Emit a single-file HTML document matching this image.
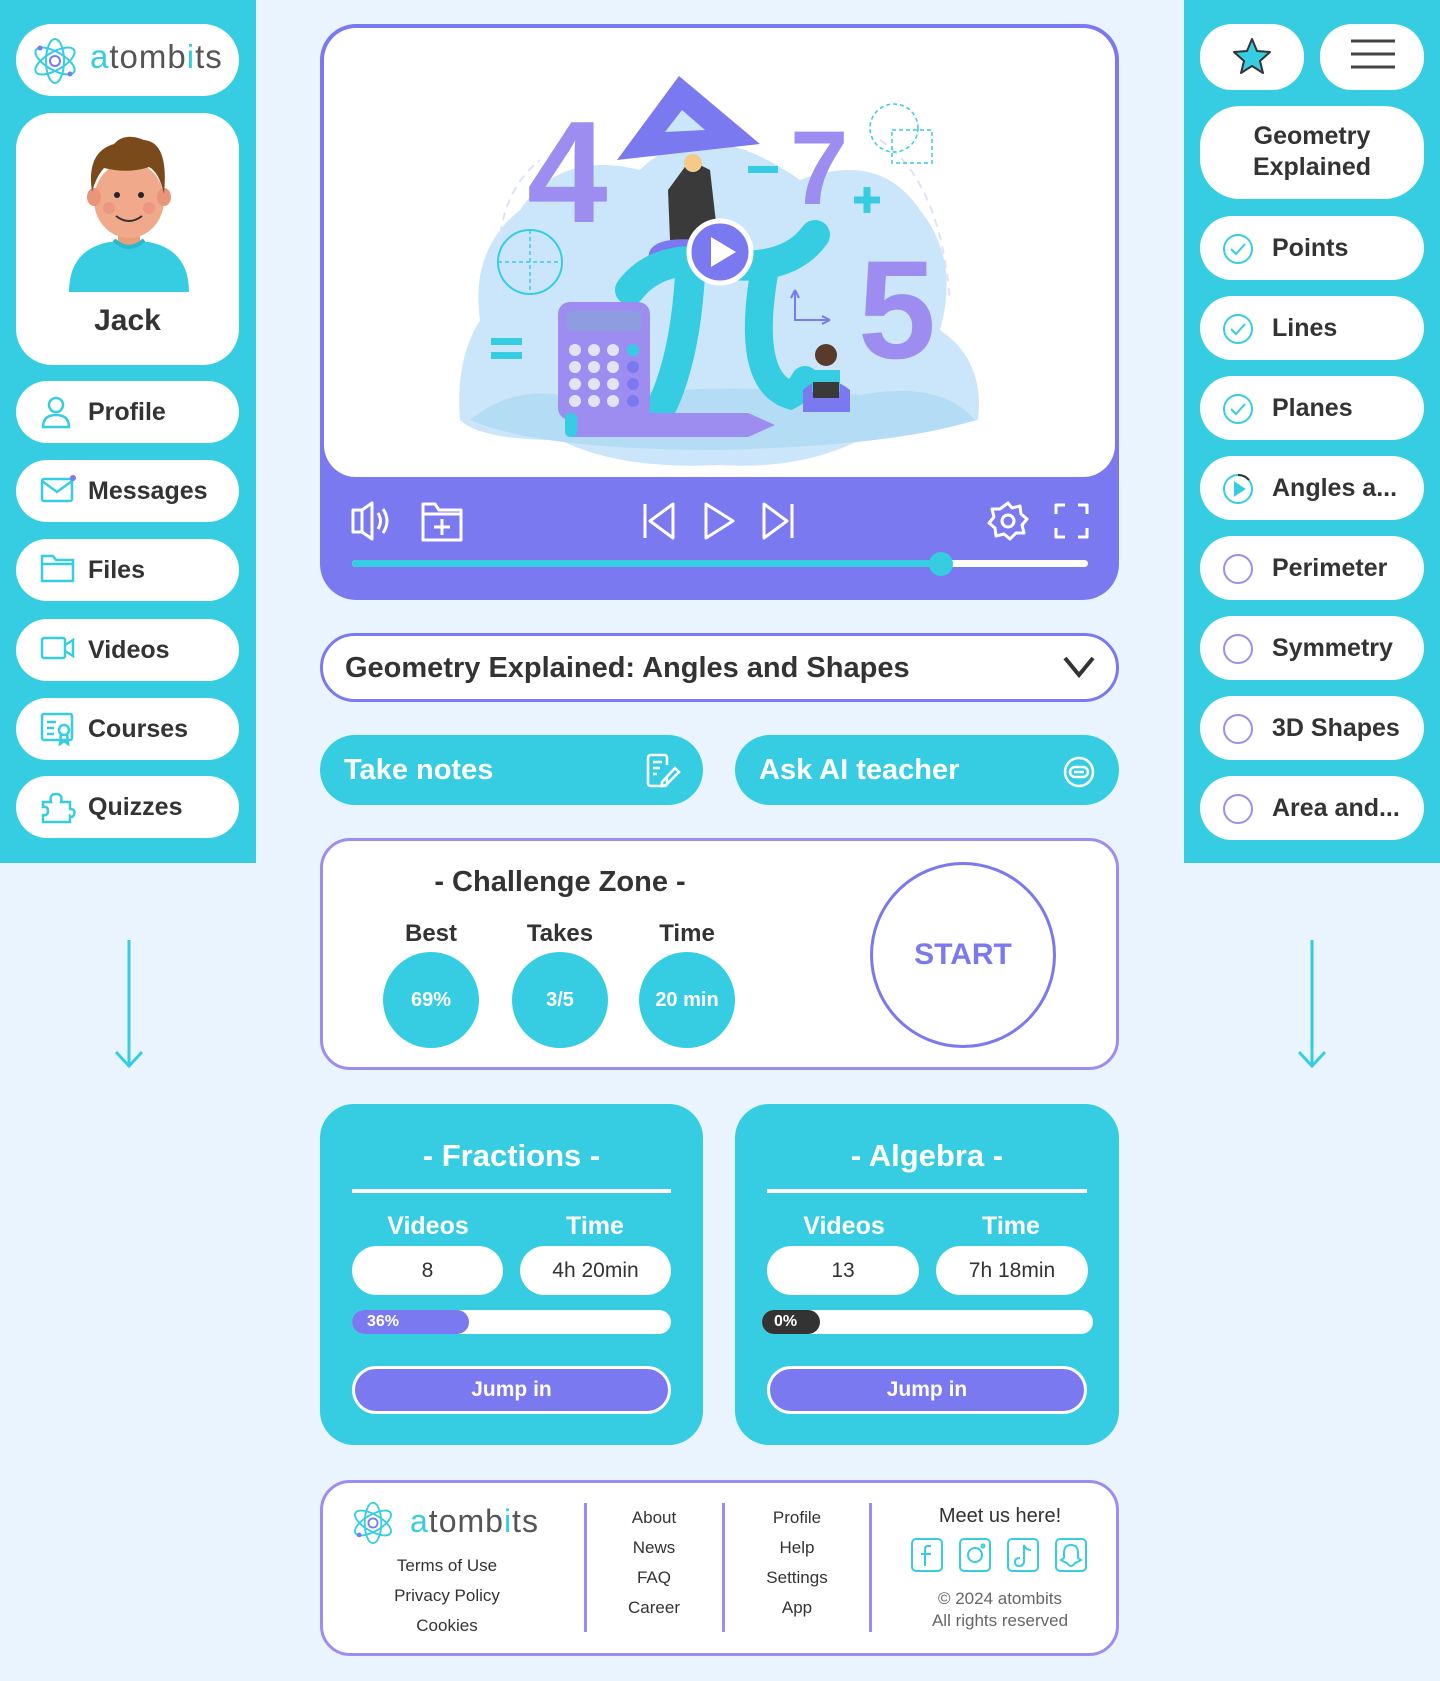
<!DOCTYPE html>
<html><head><meta charset="utf-8"><style>
*{box-sizing:border-box;margin:0;padding:0}
body{width:1440px;height:1681px;background:#EAF4FE;position:relative;overflow:hidden;font-family:"Liberation Sans",sans-serif;color:#333;font-weight:bold}
.a{position:absolute}
.side{background:#36CDE3}
.pill{position:absolute;background:#fff;border-radius:32px}
.nav{left:16px;width:223px;height:62px;font-size:25px;display:flex;align-items:center;padding-left:72px}
.nav svg{position:absolute;left:24px;top:14px}
.ri{left:1200px;width:224px;height:64px;font-size:25px;display:flex;align-items:center;padding-left:72px}
.ri svg{position:absolute;left:22px;top:17px}
.c{text-align:center}
.w{color:#fff}
</style></head><body>
<div class="a side" style="left:0;top:0;width:256px;height:863px"></div>
<div class="pill" style="left:16px;top:24px;width:223px;height:72px;border-radius:36px"></div>
<svg class="a" style="left:30px;top:36px" width="50" height="50" viewBox="0 0 50 50"><g fill="none" stroke="#36CDE3" stroke-width="2"><ellipse cx="25" cy="25" rx="22" ry="9" transform="rotate(30 25 25)"/><ellipse cx="25" cy="25" rx="22" ry="9" transform="rotate(-30 25 25)"/><ellipse cx="25" cy="25" rx="22" ry="9" transform="rotate(90 25 25)"/></g><circle cx="25" cy="25" r="5" fill="none" stroke="#7B79F0" stroke-width="2"/><circle cx="10" cy="12" r="2.5" fill="#7B79F0"/><circle cx="40" cy="38" r="2.5" fill="#7B79F0"/></svg>
<div class="a" style="left:90px;top:38px;font-size:33px;font-weight:normal;color:#36CDE3;letter-spacing:1px">a<span style="color:#555">tomb</span>i<span style="color:#555">ts</span></div>
<div class="pill" style="left:16px;top:113px;width:223px;height:252px;border-radius:36px"></div>
<svg class="a" style="left:64px;top:132px" width="130" height="162" viewBox="0 0 130 162"><path d="M5 160 Q5 118 45 110 L85 110 Q125 118 125 160 Z" fill="#36CDE3"/><rect x="54" y="92" width="22" height="22" fill="#E8A07A"/><path d="M50 108 Q65 122 80 108" fill="none" stroke="#2BB8CC" stroke-width="4"/><ellipse cx="65" cy="68" rx="35" ry="38" fill="#F0A98A"/><ellipse cx="30" cy="65" rx="7" ry="9" fill="#E8957A"/><ellipse cx="100" cy="65" rx="7" ry="9" fill="#E8957A"/><path d="M28 60 Q22 20 50 12 Q60 0 80 8 Q105 10 100 62 Q95 40 85 35 Q65 42 40 36 Q32 45 28 60Z" fill="#7A4A1A"/><circle cx="53" cy="63" r="3" fill="#223"/><circle cx="77" cy="63" r="3" fill="#223"/><path d="M52 84 Q65 94 78 84" fill="none" stroke="#333" stroke-width="2"/><circle cx="45" cy="76" r="6" fill="#E8857A" opacity=".5"/><circle cx="85" cy="76" r="6" fill="#E8857A" opacity=".5"/></svg>
<div class="a c" style="left:16px;top:304px;width:223px;font-size:30px">Jack</div>

<div class="pill nav" style="top:381px"><svg width="32" height="34" viewBox="0 0 32 34" fill="none" stroke="#36CDE3" stroke-width="2.5"><circle cx="16" cy="10" r="7"/><path d="M3 32 Q3 20 16 20 Q29 20 29 32 Z"/></svg>Profile</div>
<div class="pill nav" style="top:460px"><svg width="36" height="30" viewBox="0 0 36 30" fill="none" stroke="#36CDE3" stroke-width="2.5"><rect x="2" y="5" width="30" height="22" rx="2"/><path d="M2 7 L17 18 L32 7"/><circle cx="33" cy="4" r="3" fill="#7B79F0" stroke="none"/></svg>Messages</div>
<div class="pill nav" style="top:539px"><svg width="36" height="30" viewBox="0 0 36 30" fill="none" stroke="#36CDE3" stroke-width="2.5"><path d="M2 3 H13 L16 7 H33 V28 H2 Z M2 11 H33"/></svg>Files</div>
<div class="pill nav" style="top:619px"><svg width="36" height="30" viewBox="0 0 36 30" fill="none" stroke="#36CDE3" stroke-width="2.5"><rect x="2" y="5" width="23" height="20" rx="2"/><path d="M25 12 L33 7 V23 L25 18"/></svg>Videos</div>
<div class="pill nav" style="top:698px"><svg width="36" height="34" viewBox="0 0 36 34" fill="none" stroke="#36CDE3" stroke-width="2.5"><rect x="2" y="2" width="30" height="26" rx="2"/><path d="M7 10 H16 M7 16 H14 M7 22 H14"/><circle cx="24" cy="18" r="5"/><path d="M21 22 L20 32 L24 29 L28 32 L27 22"/></svg>Courses</div>
<div class="pill nav" style="top:776px"><svg width="36" height="34" viewBox="0 0 36 34" fill="none" stroke="#36CDE3" stroke-width="2.5"><path d="M3 12 H11 Q9 4 16 4 Q23 4 21 12 H30 V19 Q36 19 34 25 Q32 28 30 26 V32 H3 V25 Q8 26 8 21 Q8 16 3 17 Z"/></svg>Quizzes</div>

<svg class="a" style="left:113px;top:938px" width="32" height="134"><path d="M16 2 V128 M3 114 L16 128 L29 114" fill="none" stroke="#36CDE3" stroke-width="3"/></svg>
<svg class="a" style="left:1296px;top:938px" width="32" height="134"><path d="M16 2 V128 M3 114 L16 128 L29 114" fill="none" stroke="#36CDE3" stroke-width="3"/></svg>

<div class="a side" style="left:1184px;top:0;width:256px;height:863px"></div>
<div class="pill" style="left:1200px;top:24px;width:104px;height:66px"></div>
<svg class="a" style="left:1232px;top:37px" width="40" height="38" viewBox="0 0 40 38"><path d="M20 2 L25 14 L38 15 L28 24 L31 36 L20 29 L9 36 L12 24 L2 15 L15 14 Z" fill="#36CDE3" stroke="#333" stroke-width="2" stroke-linejoin="round"/></svg>
<div class="pill" style="left:1320px;top:24px;width:104px;height:66px"></div>
<svg class="a" style="left:1350px;top:38px" width="46" height="32"><path d="M1 3 H45 M1 16 H45 M1 29 H45" stroke="#444" stroke-width="3"/></svg>
<div class="pill c" style="left:1200px;top:106px;width:224px;height:93px;border-radius:40px;font-size:25px;line-height:31px;padding-top:15px">Geometry<br>Explained</div>
<div class="pill ri" style="top:216px"><svg width="32" height="32" fill="none" stroke="#36CDE3" stroke-width="2"><circle cx="16" cy="16" r="14"/><path d="M9 16 L14 21 L23 11"/></svg>Points</div>
<div class="pill ri" style="top:296px"><svg width="32" height="32" fill="none" stroke="#36CDE3" stroke-width="2"><circle cx="16" cy="16" r="14"/><path d="M9 16 L14 21 L23 11"/></svg>Lines</div>
<div class="pill ri" style="top:376px"><svg width="32" height="32" fill="none" stroke="#36CDE3" stroke-width="2"><circle cx="16" cy="16" r="14"/><path d="M9 16 L14 21 L23 11"/></svg>Planes</div>
<div class="pill ri" style="top:456px"><svg width="32" height="32" fill="none" stroke="#36CDE3" stroke-width="2"><circle cx="16" cy="16" r="14"/><path d="M13 10 L22 16 L13 22 Z" fill="#36CDE3"/><path d="M16 2 A14 14 0 0 1 27 7" stroke="#333"/></svg>Angles a...</div>
<div class="pill ri" style="top:536px"><svg width="32" height="32" fill="none" stroke="#9D8DF1" stroke-width="2"><circle cx="16" cy="16" r="14"/></svg>Perimeter</div>
<div class="pill ri" style="top:616px"><svg width="32" height="32" fill="none" stroke="#9D8DF1" stroke-width="2"><circle cx="16" cy="16" r="14"/></svg>Symmetry</div>
<div class="pill ri" style="top:696px"><svg width="32" height="32" fill="none" stroke="#9D8DF1" stroke-width="2"><circle cx="16" cy="16" r="14"/></svg>3D Shapes</div>
<div class="pill ri" style="top:776px"><svg width="32" height="32" fill="none" stroke="#9D8DF1" stroke-width="2"><circle cx="16" cy="16" r="14"/></svg>Area and...</div>

<div class="a" style="left:320px;top:24px;width:799px;height:576px;background:#7B79F0;border-radius:36px"></div>
<div class="a" style="left:324px;top:28px;width:791px;height:449px;background:#fff;border-radius:32px"></div>
<svg class="a" style="left:320px;top:24px" width="799" height="460" viewBox="320 24 799 460">
<path d="M460 420 Q455 360 480 320 Q470 250 520 210 Q560 150 640 170 Q700 110 800 180 Q880 150 920 210 Q960 260 940 330 Q985 360 978 420 Q900 440 860 440 Q800 470 720 465 Q620 470 560 440 Q480 440 460 420 Z" fill="#CBE6FA"/>
<path d="M470 420 Q520 380 580 400 Q700 380 860 395 Q940 380 975 420 Q900 445 720 450 Q540 450 470 420Z" fill="#B4DCF5"/>
<path d="M500 290 Q490 200 540 160 M880 140 Q940 180 950 300" fill="none" stroke="#DDE3F5" stroke-width="2" stroke-dasharray="8 6"/>
<text x="527" y="222" font-family="Liberation Sans" font-weight="bold" font-size="145" fill="#9D8DF1">4</text>
<text x="790" y="204" font-family="Liberation Sans" font-weight="bold" font-size="105" fill="#9D8DF1">7</text>
<text x="858" y="358" font-family="Liberation Sans" font-weight="bold" font-size="140" fill="#9D8DF1">5</text>
<rect x="748" y="166" width="30" height="7" fill="#36CDE3"/>
<path d="M854 200 H880 M867 187 V213" stroke="#36CDE3" stroke-width="7"/>
<rect x="491" y="338" width="31" height="7" fill="#36CDE3"/><rect x="491" y="352" width="31" height="7" fill="#36CDE3"/>
<circle cx="530" cy="262" r="32" fill="none" stroke="#36CDE3" stroke-width="2"/>
<path d="M498 262 H562 M530 230 V294" stroke="#36CDE3" stroke-width="1.5" stroke-dasharray="4 3"/>
<circle cx="894" cy="128" r="24" fill="none" stroke="#36CDE3" stroke-width="1.5" stroke-dasharray="4 3"/>
<rect x="892" y="130" width="40" height="33" fill="none" stroke="#36CDE3" stroke-width="1.5" stroke-dasharray="4 3"/>
<path d="M617 160 L679 76 L760 144 Z" fill="#7B79F0"/><path d="M665 132 L682 110 L705 130 Z" fill="#CBE6FA"/>
<path d="M668 190 L690 160 L710 170 L718 240 L670 240 Z" fill="#3A3A3A"/><circle cx="693" cy="163" r="9" fill="#F5C98A"/>
<path d="M650 265 Q640 235 700 240 Q720 250 700 285" fill="#7B79F0"/>
<path d="M630 290 Q660 250 730 265 Q790 270 815 235" fill="none" stroke="#36CDE3" stroke-width="30" stroke-linecap="round"/>
<path d="M690 275 Q685 360 660 410" fill="none" stroke="#36CDE3" stroke-width="30" stroke-linecap="round"/>
<path d="M765 268 Q745 380 790 395 Q800 390 805 380" fill="none" stroke="#36CDE3" stroke-width="28" stroke-linecap="round"/>
<rect x="558" y="302" width="92" height="118" rx="12" fill="#9D8DF1"/><rect x="567" y="311" width="74" height="20" rx="6" fill="#8E9CE0"/>
<g fill="#E3E3F7"><circle cx="575" cy="350" r="6"/><circle cx="594" cy="350" r="6"/><circle cx="613" cy="350" r="6"/><circle cx="575" cy="367" r="6"/><circle cx="594" cy="367" r="6"/><circle cx="613" cy="367" r="6"/><circle cx="575" cy="384" r="6"/><circle cx="594" cy="384" r="6"/><circle cx="613" cy="384" r="6"/><circle cx="575" cy="401" r="6"/><circle cx="594" cy="401" r="6"/><circle cx="613" cy="401" r="6"/></g>
<g fill="#7B79F0"><circle cx="633" cy="367" r="6"/><circle cx="633" cy="384" r="6"/><circle cx="633" cy="401" r="6"/></g><circle cx="633" cy="350" r="6" fill="#36CDE3"/>
<path d="M572 413 H748 L775 425 L748 437 H572 Z" fill="#9D8DF1"/><rect x="565" y="413" width="12" height="24" rx="5" fill="#36CDE3"/>
<path d="M803 390 Q825 370 850 390 L850 412 L803 412 Z" fill="#7B79F0"/><circle cx="826" cy="355" r="11" fill="#5A3A2A"/><rect x="812" y="370" width="28" height="22" fill="#36CDE3"/><rect x="813" y="382" width="26" height="16" fill="#3A3A3A"/>
<path d="M795 290 V320 H830 M795 290 L791 298 M795 290 L799 298 M830 320 L822 316 M830 320 L822 324" stroke="#7B79F0" stroke-width="2" fill="none"/>
<circle cx="720" cy="252" r="31" fill="#7B79F0" stroke="#fff" stroke-width="5"/><path d="M711 237 L736 252 L711 267 Z" fill="#fff"/>
</svg>
<svg class="a" style="left:350px;top:500px" width="760" height="76" fill="none" stroke="#fff" stroke-width="3" stroke-linejoin="round">
<rect x="3" y="10" width="9" height="22"/><path d="M12 10 L22 3 V39 L12 32"/><path d="M28 13 Q33 21 28 29 M33 9 Q41 21 33 33"/>
<path d="M73 4 H85 L89 10 H111 V40 H73 Z M73 14 H111 M92 19 V35 M84 27 H100"/>
<path d="M295 4 V38 M323 4 L300 21 L323 38 Z"/>
<path d="M356 4 L383 21 L356 38 Z"/>
<path d="M414 4 L437 21 L414 38 Z M442 4 V38"/>
<circle cx="658" cy="21" r="6"/><path d="M658 3 L662 8 L670 6 L671 14 L677 19 L672 25 L674 33 L666 33 L660 39 L654 34 L646 36 L645 28 L639 23 L644 17 L642 9 L650 9 Z"/>
<path d="M706 14 V5 H715 M728 5 H737 V14 M737 28 V37 H728 M715 37 H706 V28"/>
</svg>
<div class="a" style="left:352px;top:560px;width:736px;height:7px;background:#fff;border-radius:4px"></div>
<div class="a" style="left:352px;top:560px;width:590px;height:7px;background:#36CDE3;border-radius:4px"></div>
<div class="a" style="left:929px;top:552px;width:24px;height:24px;background:#36CDE3;border-radius:50%"></div>

<div class="a" style="left:320px;top:633px;width:799px;height:69px;background:#fff;border:3px solid #7B79F0;border-radius:35px;font-size:29px;padding:16px 0 0 22px">Geometry Explained: Angles and Shapes</div>
<svg class="a" style="left:1062px;top:655px" width="34" height="24"><path d="M3 3 L17 20 L31 3" fill="none" stroke="#333" stroke-width="4"/></svg>

<div class="a w" style="left:320px;top:735px;width:383px;height:70px;background:#36CDE3;border-radius:35px;font-size:29px;padding:19px 0 0 24px">Take notes</div>
<svg class="a" style="left:645px;top:752px" width="36" height="36" fill="none" stroke="#fff" stroke-width="2.5"><path d="M22 26 V31 Q22 34 19 34 H6 Q3 34 3 31 V6 Q3 3 6 3 H19 Q22 3 22 6 V13 M8 10 H17 M8 16 H15 M8 22 H12"/><path d="M17 30 L30 16 L34 20 L21 33 L17 34 Z"/></svg>
<div class="a w" style="left:735px;top:735px;width:384px;height:70px;background:#36CDE3;border-radius:35px;font-size:29px;padding:19px 0 0 24px">Ask AI teacher</div>
<svg class="a" style="left:1062px;top:755px" width="34" height="34" fill="none" stroke="#fff" stroke-width="2.5"><circle cx="17" cy="17" r="14"/><rect x="8" y="12" width="18" height="10" rx="5"/><path d="M12 17 H22"/></svg>

<div class="a" style="left:320px;top:838px;width:799px;height:232px;background:#fff;border:3px solid #9D8DF1;border-radius:30px"></div>
<div class="a c" style="left:380px;top:866px;width:360px;font-size:29px">- Challenge Zone -</div>
<div class="a c" style="left:381px;top:920px;width:100px;font-size:24px">Best</div>
<div class="a c" style="left:510px;top:920px;width:100px;font-size:24px">Takes</div>
<div class="a c" style="left:637px;top:920px;width:100px;font-size:24px">Time</div>
<div class="a c w" style="left:383px;top:952px;width:96px;height:96px;border-radius:50%;background:#36CDE3;font-size:20px;line-height:96px">69%</div>
<div class="a c w" style="left:512px;top:952px;width:96px;height:96px;border-radius:50%;background:#36CDE3;font-size:20px;line-height:96px">3/5</div>
<div class="a c w" style="left:639px;top:952px;width:96px;height:96px;border-radius:50%;background:#36CDE3;font-size:20px;line-height:96px">20 min</div>
<div class="a c" style="left:870px;top:862px;width:186px;height:186px;border-radius:50%;border:3px solid #7B79F0;font-size:30px;line-height:180px;color:#7B79F0">START</div>

<div class="a" style="left:320px;top:1104px;width:383px;height:341px;background:#36CDE3;border-radius:34px"></div>
<div class="a c w" style="left:320px;top:1138px;width:383px;font-size:31px">- Fractions -</div>
<div class="a" style="left:352px;top:1189px;width:319px;height:4px;background:#fff"></div>
<div class="a c w" style="left:378px;top:1212px;width:100px;font-size:25px">Videos</div>
<div class="a c w" style="left:545px;top:1212px;width:100px;font-size:25px">Time</div>
<div class="pill c" style="left:352px;top:1246px;width:151px;height:49px;font-size:21px;font-weight:normal;line-height:49px">8</div>
<div class="pill c" style="left:520px;top:1246px;width:151px;height:49px;font-size:21px;font-weight:normal;line-height:49px">4h 20min</div>
<div class="pill" style="left:352px;top:1310px;width:319px;height:24px;border-radius:12px"></div>
<div class="a w" style="left:352px;top:1310px;width:117px;height:24px;border-radius:12px;background:#7B79F0;font-size:16px;line-height:24px;padding-left:15px">36%</div>
<div class="a c w" style="left:352px;top:1366px;width:319px;height:48px;border-radius:24px;background:#7B79F0;border:3px solid #fff;font-size:21px;line-height:42px">Jump in</div>

<div class="a" style="left:735px;top:1104px;width:384px;height:341px;background:#36CDE3;border-radius:34px"></div>
<div class="a c w" style="left:735px;top:1138px;width:384px;font-size:31px">- Algebra -</div>
<div class="a" style="left:767px;top:1189px;width:320px;height:4px;background:#fff"></div>
<div class="a c w" style="left:794px;top:1212px;width:100px;font-size:25px">Videos</div>
<div class="a c w" style="left:961px;top:1212px;width:100px;font-size:25px">Time</div>
<div class="pill c" style="left:767px;top:1246px;width:152px;height:49px;font-size:21px;font-weight:normal;line-height:49px">13</div>
<div class="pill c" style="left:936px;top:1246px;width:152px;height:49px;font-size:21px;font-weight:normal;line-height:49px">7h 18min</div>
<div class="pill" style="left:762px;top:1310px;width:331px;height:24px;border-radius:12px"></div>
<div class="a w" style="left:762px;top:1310px;width:58px;height:24px;border-radius:12px;background:#333;font-size:16px;line-height:24px;padding-left:12px">0%</div>
<div class="a c w" style="left:767px;top:1366px;width:320px;height:48px;border-radius:24px;background:#7B79F0;border:3px solid #fff;font-size:21px;line-height:42px">Jump in</div>

<div class="a" style="left:320px;top:1480px;width:799px;height:176px;background:#fff;border:3px solid #9D8DF1;border-radius:30px"></div>
<svg class="a" style="left:350px;top:1500px" width="46" height="46" viewBox="0 0 50 50"><g fill="none" stroke="#36CDE3" stroke-width="2"><ellipse cx="25" cy="25" rx="22" ry="9" transform="rotate(30 25 25)"/><ellipse cx="25" cy="25" rx="22" ry="9" transform="rotate(-30 25 25)"/><ellipse cx="25" cy="25" rx="22" ry="9" transform="rotate(90 25 25)"/></g><circle cx="25" cy="25" r="5" fill="none" stroke="#7B79F0" stroke-width="2"/><circle cx="10" cy="38" r="2.5" fill="#7B79F0"/></svg>
<div class="a" style="left:410px;top:1503px;font-size:32px;font-weight:normal;color:#36CDE3;letter-spacing:1px">a<span style="color:#555">tomb</span>i<span style="color:#555">ts</span></div>
<div class="a c" style="left:347px;top:1551px;width:200px;font-size:17px;font-weight:normal;line-height:30px">Terms of Use<br>Privacy Policy<br>Cookies</div>
<div class="a" style="left:584px;top:1503px;width:3px;height:129px;background:#9D8DF1"></div>
<div class="a" style="left:722px;top:1503px;width:3px;height:129px;background:#9D8DF1"></div>
<div class="a" style="left:869px;top:1503px;width:3px;height:129px;background:#9D8DF1"></div>
<div class="a c" style="left:604px;top:1503px;width:100px;font-size:17px;font-weight:normal;line-height:30px">About<br>News<br>FAQ<br>Career</div>
<div class="a c" style="left:747px;top:1503px;width:100px;font-size:17px;font-weight:normal;line-height:30px">Profile<br>Help<br>Settings<br>App</div>
<div class="a c" style="left:900px;top:1505px;width:200px;font-size:20px;font-weight:normal">Meet us here!</div>
<svg class="a" style="left:911px;top:1538px" width="180" height="34" fill="none" stroke="#36CDE3" stroke-width="2">
<rect x="1" y="1" width="30" height="32" rx="4"/><path d="M20 8 H17 Q14 8 14 11 V28 M10 16 H20"/>
<rect x="49" y="1" width="30" height="32" rx="4"/><circle cx="64" cy="17" r="7"/><circle cx="72" cy="8" r="1.5"/>
<rect x="97" y="1" width="30" height="32" rx="4"/><path d="M113 7 V23 Q113 28 108 28 Q104 28 104 24 Q104 20 109 20 M113 7 Q115 12 120 12"/>
<rect x="145" y="1" width="30" height="32" rx="4"/><path d="M160 7 Q153 7 153 15 V20 L150 22 Q153 24 156 25 Q158 28 160 28 Q162 28 164 25 Q167 24 170 22 L167 20 V15 Q167 7 160 7 Z"/>
</svg>
<div class="a c" style="left:900px;top:1588px;width:200px;font-size:17px;font-weight:normal;color:#666;line-height:22px">© 2024 atombits<br>All rights reserved</div>
</body></html>
